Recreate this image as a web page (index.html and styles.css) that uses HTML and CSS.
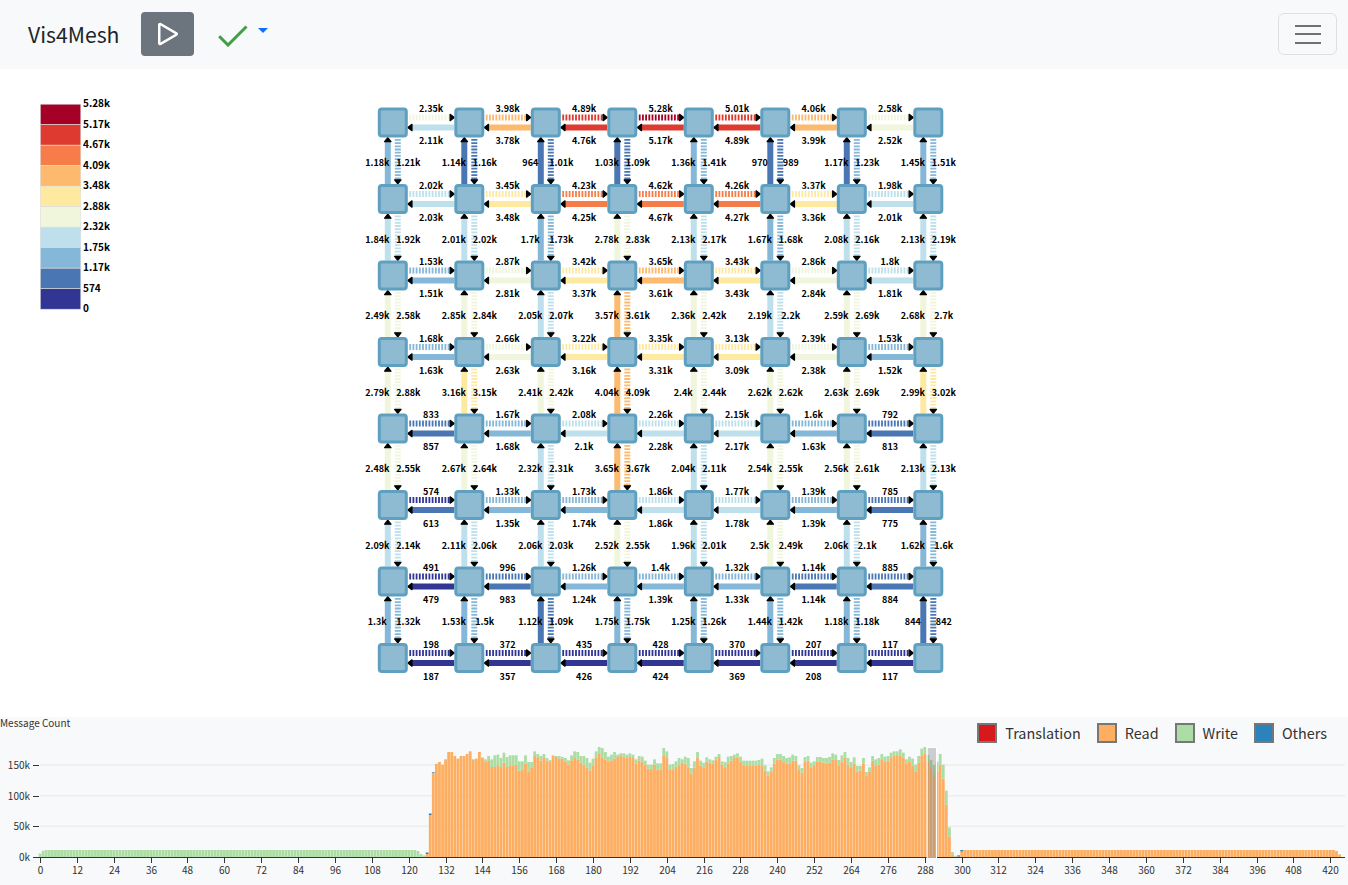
FILE: index.html
```html
<!DOCTYPE html>
<html lang="en">
<head>
<meta charset="utf-8">
<title>Vis4Mesh</title>
<link rel="stylesheet" href="styles.css">
</head>
<body>
<nav class="navbar">
  <span class="brand">Vis4Mesh</span>
  <button class="play-btn" type="button" aria-label="Play">
    <svg class="play-icon" viewBox="0 0 16 16" fill="currentColor"><path d="M10.804 8 5 4.633v6.734L10.804 8zm.792-.696a.802.802 0 0 1 0 1.392l-6.363 3.692C4.713 12.69 4 12.345 4 11.692V4.308c0-.653.713-.998 1.233-.696l6.363 3.692z"/></svg>
  </button>
  <div class="status">
    <svg class="check-icon" viewBox="0 0 30 22"><path d="M1.2 11.2 10 20 28.5 1.5"/></svg>
    <span class="caret"></span>
  </div>
  <button class="toggler" type="button" aria-label="Menu">
    <span class="toggler-bar"></span>
    <span class="toggler-bar"></span>
    <span class="toggler-bar"></span>
  </button>
</nav>
<main class="graph-area">
  <svg id="graph" class="graph" viewBox="0 69 1348 648"></svg>
</main>
<section class="timeline">
  <svg id="chart" class="chart" viewBox="0 717 1348 168"></svg>
  <div class="chart-title">Message Count</div>
  <ul class="chart-legend">
    <li class="legend-item"><span class="swatch swatch-translation"></span>Translation</li>
    <li class="legend-item"><span class="swatch swatch-read"></span>Read</li>
    <li class="legend-item"><span class="swatch swatch-write"></span>Write</li>
    <li class="legend-item"><span class="swatch swatch-others"></span>Others</li>
  </ul>
</section>
<script src="script.js"></script>
</body>
</html>
```
FILE: styles.css
```css
* { box-sizing: border-box; }
html, body { margin: 0; padding: 0; }
body {
  width: 1348px;
  height: 885px;
  overflow: hidden;
  background: #fff;
  color: #212529;
  font-family: "Noto Sans CJK JP", "Noto Sans", sans-serif;
}
.navbar {
  display: flex;
  align-items: center;
  height: 69px;
  padding: 0 11px 1px 28px;
  background: #f8f9fa;
}
.brand { font-size: 21.2px; line-height: 1; width: 113px; }
.play-btn {
  display: flex;
  align-items: center;
  justify-content: center;
  width: 53px;
  height: 44px;
  padding: 0;
  border: 0;
  border-radius: 4px;
  background: #6c757d;
  color: #fff;
}
.play-icon { width: 40px; height: 40px; }
.status { display: flex; align-items: flex-start; margin-left: 24px; padding-top: 3px; }
.check-icon { width: 30px; height: 22px; fill: none; stroke: #3f9e46; stroke-width: 3; }
.caret {
  width: 0;
  height: 0;
  margin: 3px 0 0 10px;
  border-top: 5px solid #0d6efd;
  border-left: 5px solid transparent;
  border-right: 5px solid transparent;
}
.toggler {
  display: flex;
  flex-direction: column;
  justify-content: center;
  align-items: center;
  gap: 6.5px;
  width: 59px;
  height: 42px;
  margin-left: auto;
  padding: 0;
  border: 1px solid rgba(0, 0, 0, .1);
  border-radius: 6px;
  background: transparent;
}
.toggler-bar { display: block; width: 26px; height: 2px; background: #6f7275; }
.graph-area { height: 648px; }
.graph, .chart { display: block; width: 1348px; }
.graph { height: 648px; }
.chart { height: 168px; }
.node { fill: #8ebbd1; stroke: #5fa0c0; stroke-width: 3; }
.edge { fill: none; stroke-width: 6; }
.edge-dashed { stroke-dasharray: 1.8 1.4; }
.arrow { fill: #000; stroke: #000; stroke-width: 1.2; stroke-linejoin: round; }
.edge-label {
  font-family: "Noto Sans CJK JP", sans-serif;
  font-size: 9px;
  font-weight: 700;
  fill: #000;
  text-anchor: middle;
  dominant-baseline: central;
}
.scale-rect { stroke: #ddd; stroke-width: .6; }
.scale-label {
  font-family: "Noto Sans CJK JP", sans-serif;
  font-size: 10px;
  font-weight: 700;
  fill: #000;
  dominant-baseline: central;
}
.timeline { position: relative; height: 168px; background: #f8f9fa; }
.chart-title {
  position: absolute;
  top: 0;
  left: 0;
  font-size: 10px;
  line-height: 12px;
  color: #333;
}
.grid-line { stroke: #eceded; stroke-width: 1.5; }
.axis-line, .tick { stroke: #333; stroke-width: 1; }
.tick-label { font-size: 10px; fill: #333; dominant-baseline: central; }
.tick-label-x { text-anchor: middle; }
.tick-label-y { text-anchor: end; }
.bar-write { fill: #abdda4; }
.bar-read { fill: #fdae61; }
.bar-others { fill: #2b83ba; }
.brush { fill: rgba(128, 128, 128, .36); stroke: #fff; stroke-width: 1; }
.chart-legend {
  position: absolute;
  top: 6px;
  right: 21px;
  display: flex;
  gap: 16px;
  margin: 0;
  padding: 0;
  list-style: none;
  font-size: 14.4px;
  line-height: 20px;
  color: #333;
}
.legend-item { display: flex; align-items: center; gap: 8px; }
.swatch { display: block; width: 20px; height: 20px; border: 2px solid #777; }
.swatch-translation { background: #d7191c; }
.swatch-read { background: #fdae61; }
.swatch-write { background: #abdda4; }
.swatch-others { background: #2b83ba; }
```
FILE: script.js
```js
const NS = "http://www.w3.org/2000/svg";
function el(parent, tag, attrs, text) {
  const e = document.createElementNS(NS, tag);
  for (const k in attrs) e.setAttribute(k, attrs[k]);
  if (text !== undefined) e.textContent = text;
  parent.appendChild(e);
  return e;
}

/* ---------- mesh graph ---------- */
const graph = document.getElementById("graph");
const X0 = 392.8, Y0 = 122.5, STEP = 76.5, HALF = 15;
const scale = [
  [5280, "#a50026", "5.28k"], [5170, "#de3a2f", "5.17k"], [4670, "#f67d4a", "4.67k"],
  [4090, "#fdba6f", "4.09k"], [3480, "#fee9a0", "3.48k"], [2880, "#eff6dc", "2.88k"],
  [2320, "#bde0ec", "2.32k"], [1750, "#85b7d9", "1.75k"], [1170, "#4a77b4", "1.17k"],
  [574, "#313695", "574"]
];
function colorOf(label) {
  const v = label.endsWith("k") ? parseFloat(label) * 1000 : parseFloat(label);
  let c = scale[0][1];
  for (const s of scale) if (v <= s[0]) c = s[1];
  return c;
}
const rows = [
  ["2.35k 3.98k 4.89k 5.28k 5.01k 4.06k 2.58k", "2.11k 3.78k 4.76k 5.17k 4.89k 3.99k 2.52k"],
  ["2.02k 3.45k 4.23k 4.62k 4.26k 3.37k 1.98k", "2.03k 3.48k 4.25k 4.67k 4.27k 3.36k 2.01k"],
  ["1.53k 2.87k 3.42k 3.65k 3.43k 2.86k 1.8k", "1.51k 2.81k 3.37k 3.61k 3.43k 2.84k 1.81k"],
  ["1.68k 2.66k 3.22k 3.35k 3.13k 2.39k 1.53k", "1.63k 2.63k 3.16k 3.31k 3.09k 2.38k 1.52k"],
  ["833 1.67k 2.08k 2.26k 2.15k 1.6k 792", "857 1.68k 2.1k 2.28k 2.17k 1.63k 813"],
  ["574 1.33k 1.73k 1.86k 1.77k 1.39k 785", "613 1.35k 1.74k 1.86k 1.78k 1.39k 775"],
  ["491 996 1.26k 1.4k 1.32k 1.14k 885", "479 983 1.24k 1.39k 1.33k 1.14k 884"],
  ["198 372 435 428 370 207 117", "187 357 426 424 369 208 117"]
];
const cols = [
  ["1.18k 1.14k 964 1.03k 1.36k 970 1.17k 1.45k", "1.21k 1.16k 1.01k 1.09k 1.41k 989 1.23k 1.51k"],
  ["1.84k 2.01k 1.7k 2.78k 2.13k 1.67k 2.08k 2.13k", "1.92k 2.02k 1.73k 2.83k 2.17k 1.68k 2.16k 2.19k"],
  ["2.49k 2.85k 2.05k 3.57k 2.36k 2.19k 2.59k 2.68k", "2.58k 2.84k 2.07k 3.61k 2.42k 2.2k 2.69k 2.7k"],
  ["2.79k 3.16k 2.41k 4.04k 2.4k 2.62k 2.63k 2.99k", "2.88k 3.15k 2.42k 4.09k 2.44k 2.62k 2.69k 3.02k"],
  ["2.48k 2.67k 2.32k 3.65k 2.04k 2.54k 2.56k 2.13k", "2.55k 2.64k 2.31k 3.67k 2.11k 2.55k 2.61k 2.13k"],
  ["2.09k 2.11k 2.06k 2.52k 1.96k 2.5k 2.06k 1.62k", "2.14k 2.06k 2.03k 2.55k 2.01k 2.49k 2.1k 1.6k"],
  ["1.3k 1.53k 1.12k 1.75k 1.25k 1.44k 1.18k 844", "1.32k 1.5k 1.09k 1.75k 1.26k 1.42k 1.18k 842"]
];
const edges = el(graph, "g", {});
const arrows = el(graph, "g", {});
const nodes = el(graph, "g", {});
const labels = el(graph, "g", {});
const cx = i => X0 + STEP * i, cy = j => Y0 + STEP * j;
function edge(x1, y1, x2, y2, color, dashed) {
  el(edges, "line", { x1, y1, x2, y2, stroke: color, class: dashed ? "edge edge-dashed" : "edge" });
}
function arrow(tx, ty, dx, dy) {
  const bx = tx - dx * 4.2, by = ty - dy * 4.2, w = 3.2;
  el(arrows, "polygon", { class: "arrow",
    points: `${tx},${ty} ${bx + dy * w},${by + dx * w} ${bx - dy * w},${by - dx * w}` });
}
function label(x, y, t) { el(labels, "text", { x, y, class: "edge-label" }, t); }

rows.forEach((r, j) => {
  const top = r[0].split(" "), bot = r[1].split(" "), y = cy(j);
  top.forEach((t, i) => {
    const a = cx(i) + HALF, b = cx(i + 1) - HALF;
    edge(a + 1.5, y - 5, b - 3, y - 5, colorOf(t), true);
    arrow(b, y - 5, 1, 0);
    label((a + b) / 2, y - 14, t);
    edge(a + 3, y + 5, b, y + 5, colorOf(bot[i]), false);
    arrow(a, y + 5, -1, 0);
    label((a + b) / 2, y + 18, bot[i]);
  });
});
cols.forEach((c, j) => {
  const left = c[0].split(" "), right = c[1].split(" ");
  left.forEach((t, i) => {
    const x = cx(i), a = cy(j) + HALF, b = cy(j + 1) - HALF, m = (a + b) / 2 + 2;
    edge(x - 5, a + 3, x - 5, b, colorOf(t), false);
    arrow(x - 5, a, 0, -1);
    label(x - 15.5, m, t);
    edge(x + 5, a + 1.5, x + 5, b - 3, colorOf(right[i]), true);
    arrow(x + 5, b, 0, 1);
    label(x + 15.5, m, right[i]);
  });
});
for (let j = 0; j < 8; j++) for (let i = 0; i < 8; i++) {
  el(nodes, "rect", { class: "node", x: cx(i) - 13.5, y: cy(j) - 13.5, width: 27, height: 27, rx: 2.5 });
}
scale.forEach((s, i) => {
  el(graph, "rect", { class: "scale-rect", x: 40.3, y: 104.2 + 20.5 * i, width: 40.5, height: 20.5, fill: s[1] });
  el(graph, "text", { class: "scale-label", x: 83, y: 102.6 + 20.5 * i }, s[2]);
});
el(graph, "text", { class: "scale-label", x: 83, y: 307.6 }, "0");

/* ---------- timeline ---------- */
const chart = document.getElementById("chart");
const BASE = 857, BAND = 3.072;
const AX0 = 40, AX1 = 1345;
[[150, 765], [100, 795.7], [50, 826.3]].forEach(([v, y]) => {
  el(chart, "line", { class: "grid-line", x1: AX0, x2: AX1, y1: y, y2: y });
});
[[150, 765], [100, 795.7], [50, 826.3], [0, BASE]].forEach(([v, y]) => {
  el(chart, "line", { class: "tick", x1: 33, x2: 39, y1: Math.round(y) + .5, y2: Math.round(y) + .5 });
  el(chart, "text", { class: "tick-label tick-label-y", x: 30, y: y - .7 }, v + "k");
});

/* read / write totals as pixel heights above the axis, for message bins 128..297 */
const busy = [
[92,90],[66,65],[60,60],[68,68],[52,51],[30,30],[30,30],[42,42],[50,50],[42,42],[42,42],[36,36],[28,28],[52,52],[50,50],[30,30],
[48,46],[58,52],[55,42],[75,52],[75,40],[72,38],[75,48],[62,32],[75,45],[70,40],[72,40],[68,40],[86,58],[82,58],[65,40],[88,60],
[78,60],[42,28],[48,36],[55,42],[48,36],[56,48],[58,54],[42,40],[45,42],[50,42],[50,45],[58,48],[68,55],[55,40],[48,28],[52,30],
[62,42],[68,42],[78,48],[85,62],[70,50],[48,28],[36,15],[46,18],[52,30],[58,44],[55,38],[50,30],[45,38],[42,34],[44,34],[48,38],
[45,34],[48,38],[66,52],[55,42],[58,44],[68,56],[80,68],[84,68],[68,52],[82,64],[82,64],[40,18],[48,28],[82,68],[82,66],[74,58],
[72,48],[62,52],[65,44],[78,48],[95,78],[76,58],[48,30],[70,56],[78,62],[58,46],[62,52],[64,55],[52,44],[45,36],[68,58],[78,60],
[64,44],[56,42],[48,38],[46,34],[58,44],[70,56],[72,56],[72,56],[72,56],[70,56],[68,54],[72,50],[86,70],[100,88],[90,76],[64,48],
[52,36],[52,36],[58,42],[64,48],[64,46],[56,38],[56,42],[82,70],[92,78],[58,45],[56,42],[76,62],[72,58],[58,45],[58,45],[62,48],
[64,48],[62,45],[52,34],[54,38],[70,54],[58,40],[46,30],[68,48],[78,60],[64,46],[88,72],[86,72],[64,48],[100,90],[90,76],[56,42],
[72,52],[68,48],[54,36],[58,44],[56,42],[48,32],[42,28],[42,28],[42,22],[46,32],[64,52],[60,44],[70,50],[88,68],[62,42],[40,20],
[36,15],[59,39],[74,54],[99,69],[89,59],[68,36],[110,68],[188,146],[283,256],[339,330]
];
function bars(k) {
  if (k === 0) return { write: 3.5 };
  if (k === 1) return { write: 6.3 };
  if (k <= 122) return { write: 7 };
  if (k === 123) return { write: 6 };
  if (k === 124) return { write: 3 };
  if (k === 125) return { write: 1.6 };
  if (k === 126) return { read: 3, others: 1.5 };
  if (k === 127) return { read: 42, others: 1.5 };
  if (k <= 297) {
    const [o, g] = busy[k - 128];
    const read = 115 - o / 3, tot = 115 - g / 3;
    if (k === 128) return { read, others: tot - read };
    return { read, write: tot - read };
  }
  if (k === 298) return { read: .6, write: .6 };
  if (k === 299) return { read: .4, others: 1.2 };
  if (k === 300) return { read: 5.5, others: 1.5 };
  if (k <= 421) return { read: 7 };
  if (k === 422) return { read: 6 };
  if (k === 423) return { read: 2.6 };
  return {};
}
const barG = el(chart, "g", {});
for (let k = 0; k < 424; k++) {
  const b = bars(k), x = 38.7 + BAND * k;
  let y = BASE;
  [["read", "bar-read"], ["write", "bar-write"], ["others", "bar-others"]].forEach(([n, c]) => {
    if (!b[n]) return;
    y -= b[n];
    el(barG, "rect", { class: c, x, y, width: 2.8, height: b[n] });
  });
}
el(chart, "line", { class: "axis-line", x1: 39, x2: AX1, y1: BASE + .5, y2: BASE + .5 });
for (let k = 0; k <= 420; k += 12) {
  const x = Math.round(40 + BAND * k) + .5;
  el(chart, "line", { class: "tick", x1: x, x2: x, y1: BASE, y2: BASE + 6 });
  el(chart, "text", { class: "tick-label tick-label-x", x, y: 869.5 }, k);
}
el(chart, "rect", { class: "brush", x: 927.2, y: 747.5, width: 9.3, height: 110.5 });
```
